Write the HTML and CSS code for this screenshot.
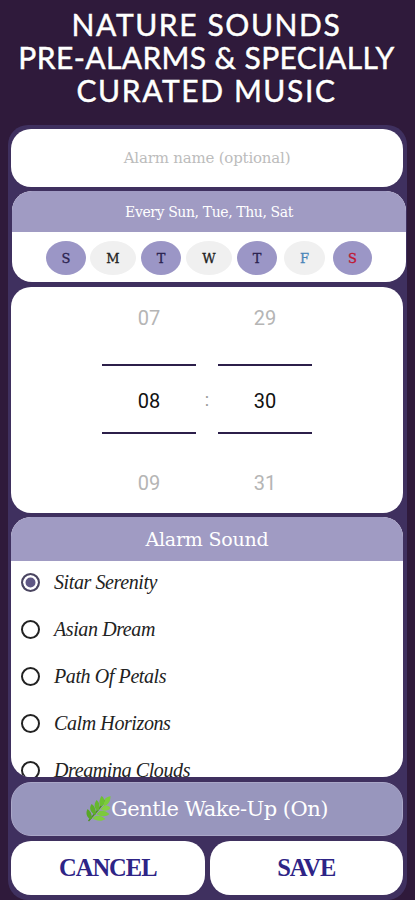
FILE: index.html
```html
<!DOCTYPE html>
<html lang="en">
<head>
<meta charset="utf-8">
<title>Alarm</title>
<link rel="stylesheet" href="styles.css">
</head>
<body>
<header class="title">NATURE SOUNDS<br><span class="title-tight">PRE-ALARMS &amp; SPECIALLY</span><br>CURATED MUSIC</header>
<main class="panel">
  <div class="card name">Alarm name (optional)</div>
  <section class="card days">
    <div class="days-head">Every Sun, Tue, Thu, Sat</div>
    <div class="days-row">
      <span class="day on first">S</span>
      <span class="day wide">M</span>
      <span class="day on">T</span>
      <span class="day wide">W</span>
      <span class="day on">T</span>
      <span class="day fri">F</span>
      <span class="day on sat">S</span>
    </div>
  </section>
  <section class="card time">
    <div class="wheel">
      <span class="num">07</span>
      <span class="num current">08</span>
      <span class="num">09</span>
    </div>
    <span class="colon">:</span>
    <div class="wheel">
      <span class="num">29</span>
      <span class="num current">30</span>
      <span class="num">31</span>
    </div>
  </section>
  <section class="card sound">
    <div class="sound-head">Alarm Sound</div>
    <ul class="sound-list">
      <li class="sound-item"><span class="radio checked"></span>Sitar Serenity</li>
      <li class="sound-item"><span class="radio"></span>Asian Dream</li>
      <li class="sound-item"><span class="radio"></span>Path Of Petals</li>
      <li class="sound-item"><span class="radio"></span>Calm Horizons</li>
      <li class="sound-item"><span class="radio"></span>Dreaming Clouds</li>
    </ul>
  </section>
  <div class="card gentle">
    <svg class="herb" viewBox="0 0 24 26" aria-hidden="true">
      <path d="M2 25C7 19 13 13 19 4" fill="none" stroke="#4f8f22" stroke-width="1.4"/>
      <path d="M18 5C18 2 21 1 24 0C24 4 23 8 18 10C16 9 17 7 18 5Z" fill="#7ccb3c"/>
      <path d="M14 10C12 7 13 3 15 0C18 2 19 6 16 10Z" fill="#6cc032"/>
      <path d="M17 10C20 9 23 10 24 12C22 15 17 16 14 13Z" fill="#86d044"/>
      <path d="M10 14C7 11 8 7 10 4C13 6 14 11 12 15Z" fill="#66b82e"/>
      <path d="M13 15C16 14 20 15 23 18C20 21 14 21 10 18Z" fill="#7cc93e"/>
      <path d="M7 18C3 15 3 11 5 8C8 10 10 14 9 19Z" fill="#5fb02a"/>
      <path d="M9 20C12 19 16 20 19 23C15 26 9 25 6 22Z" fill="#80cc40"/>
      <path d="M3 23C0 20 -1 17 1 13C4 15 6 19 5 23Z" fill="#58a628"/>
    </svg><span>Gentle Wake-Up (On)</span>
  </div>
  <div class="actions">
    <button class="action" type="button">CANCEL</button>
    <button class="action" type="button">SAVE</button>
  </div>
</main>
</body>
</html>
```
FILE: styles.css
```css
* { box-sizing: border-box; }
html, body { margin: 0; height: 100%; }
body {
  width: 415px;
  height: 900px;
  overflow: hidden;
  background: #2f1a3b;
  font-family: "DejaVu Serif", serif;
}
.title {
  height: 125px;
  padding: 8px 2px 0 0;
  text-align: center;
  color: #fff;
  font-family: Lato, sans-serif;
  font-size: 30px;
  line-height: 33px;
  letter-spacing: 1.6px;
  -webkit-text-stroke: 0.5px #fff;
  text-shadow: 0 0 1px #000;
}
.title-tight { letter-spacing: 0.4px; }
.panel {
  margin: 0 8px;
  height: 775px;
  padding: 4px 4px 0 3px;
  background: #3f305f;
  border-radius: 20px;
}
.card {
  background: #fff;
  border-radius: 20px;
  overflow: hidden;
  margin-bottom: 4px;
}
.name {
  height: 58px;
  display: flex;
  align-items: center;
  justify-content: center;
  color: #bcbcbc;
  font-size: 15px;
  letter-spacing: -0.2px;
}
.days {
  height: 91px;
  margin: 0 -3px 5px 1px;
}
.days-head {
  height: 41px;
  display: flex;
  align-items: center;
  justify-content: center;
  background: #a09bc3;
  color: #fff;
  font-size: 14px;
  letter-spacing: -0.4px;
}
.days-row {
  display: flex;
  height: 50px;
  padding: 9px 0 0 34px;
  gap: 5px;
}
.day {
  width: 40px;
  height: 34px;
  border-radius: 50%;
  display: flex;
  align-items: center;
  justify-content: center;
  background: #f0f0f0;
  color: #222;
  font-size: 13px;
  -webkit-text-stroke: 0.3px currentColor;
}
.day.on { background: #9b96c6; color: #2b2350; }
.day.first { margin-right: -1px; }
.day.wide { width: 46px; }
.day.fri { width: 41px; margin-left: 2px; color: #4a86b8; }
.day.sat { width: 39px; margin-left: 3px; color: #c0152f; }
.time {
  height: 226px;
  margin-bottom: 4px;
  padding: 2px 0 4px;
  display: flex;
  justify-content: center;
  font-family: Roboto, sans-serif;
}
.wheel {
  width: 94px;
  display: flex;
  flex-direction: column;
  gap: 20px;
}
.num {
  height: 56px;
  padding-top: 3px;
  display: flex;
  align-items: center;
  justify-content: center;
  color: #b5b5b5;
  font-size: 20px;
}
.num.current {
  height: 70px;
  border-top: 2px solid #2c1f4a;
  border-bottom: 2px solid #2c1f4a;
  color: #111;
}
.colon {
  width: 22px;
  align-self: center;
  text-align: center;
  color: #999;
  font-size: 18px;
}
.sound {
  height: 260px;
  margin-bottom: 5px;
}
.sound-head {
  height: 44px;
  display: flex;
  align-items: center;
  justify-content: center;
  background: #a09bc3;
  color: #fff;
  font-size: 19px;
  letter-spacing: -0.2px;
}
.sound-list {
  list-style: none;
  margin: 0;
  padding: 0;
}
.sound-item {
  height: 47px;
  padding: 0 0 5px 10px;
  display: flex;
  align-items: center;
  gap: 14px;
  color: #222;
  font-family: "Liberation Serif", serif;
  font-style: italic;
  font-size: 20px;
  letter-spacing: -0.4px;
}
.radio {
  width: 19px;
  height: 19px;
  flex: none;
  border-radius: 50%;
  border: 2px solid #222;
  background: #fff;
}
.radio.checked {
  border-color: #4a4560;
  background: #5f5785;
  box-shadow: inset 0 0 0 2.5px #fff;
}
.gentle {
  height: 54px;
  margin-bottom: 5px;
  display: flex;
  align-items: center;
  justify-content: center;
  background: #9896bd;
  border: 1px solid #aaa7c8;
  color: #fff;
  font-size: 21px;
  letter-spacing: -0.5px;
}
.herb {
  width: 25px;
  height: 26px;
  flex: none;
}
.actions {
  display: flex;
  gap: 5px;
}
.action {
  flex: 1;
  height: 54px;
  border: 0;
  padding: 0;
  border-radius: 20px;
  background: #fff;
  color: #2e2486;
  font-family: "Liberation Serif", serif;
  font-weight: 700;
  font-size: 24.5px;
  letter-spacing: -1px;
}
```
